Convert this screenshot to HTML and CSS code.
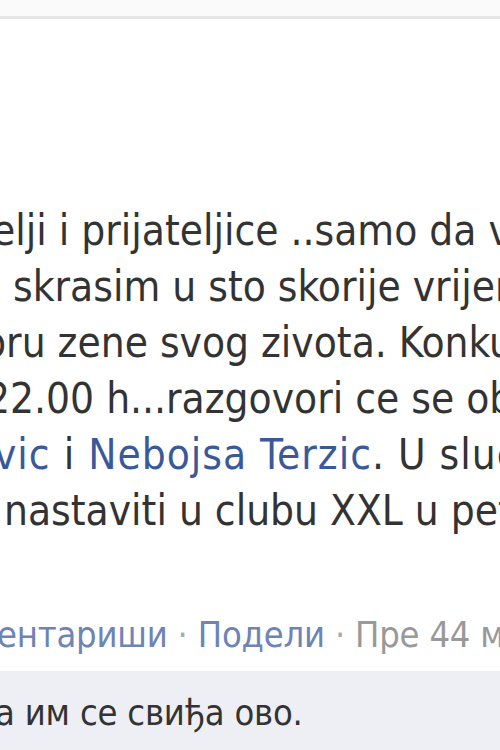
FILE: index.html
```html
<!DOCTYPE html>
<html lang="sr">
<head>
	<meta charset="UTF-8">
	<title>Објава</title>
	<link rel="stylesheet" href="styles.css">
</head>
<body>
	<div class="topbar"></div>
	<div class="story">
		<div class="message">
			<div class="line l1">elji i prijateljice ..samo da vam kazem da</div>
			<div class="line l2">skrasim u sto skorije vrijeme i</div>
			<div class="line l3">oru zene svog zivota. Konkurs traje</div>
			<div class="line l4">22.00 h...razgovori ce se obaviti</div>
			<div class="line l5"><a href="#">vic</a> i <a href="#">Nebojsa Terzic</a>. U slucaju</div>
			<div class="line l6">nastaviti u clubu XXL u petak</div>
		</div>
		<div class="actions"><a href="#">ентариши</a><span class="dot"> · </span><a href="#">Подели</a><span class="dot"> · </span><span class="time">Пре 44 минута</span></div>
	</div>
	<div class="likes">
		<div class="like-text">а им се свиђа ово.</div>
	</div>
</body>
</html>
```

FILE: styles.css
```css
html,body{margin:0;padding:0;}
body{width:500px;height:750px;overflow:hidden;background:#fff;font-family:"DejaVu Sans Condensed","DejaVu Sans",Tahoma,sans-serif;font-stretch:condensed;font-size:42px;color:#333;}
a{color:#3b5998;text-decoration:none;}

.topbar{height:16px;background:#fafafa;border-bottom:3px solid #e6e6e6;}

.story{overflow:hidden;}
.message{padding-top:184px;}
.line{line-height:56px;white-space:nowrap;}

.l1{margin-left:-8px;}
.l2{margin-left:13px;}
.l3{margin-left:-17px;}
.l4{margin-left:-14px;}
.l5{margin-left:-6px;letter-spacing:1px;}
.l6{margin-left:4px;}

.actions{margin-top:68px;margin-left:-3px;font-size:36px;letter-spacing:-0.2px;line-height:56px;white-space:nowrap;color:#999;}
.actions a{color:#6d84b4;}
.actions .dot{color:#aaa;}
.actions .time{color:#999;}

.likes{margin-top:8px;height:79px;padding-top:14px;box-sizing:border-box;background:#edeff4;overflow:hidden;}
.like-text{margin-left:-5px;font-size:36px;letter-spacing:-0.2px;line-height:56px;white-space:nowrap;}
```
